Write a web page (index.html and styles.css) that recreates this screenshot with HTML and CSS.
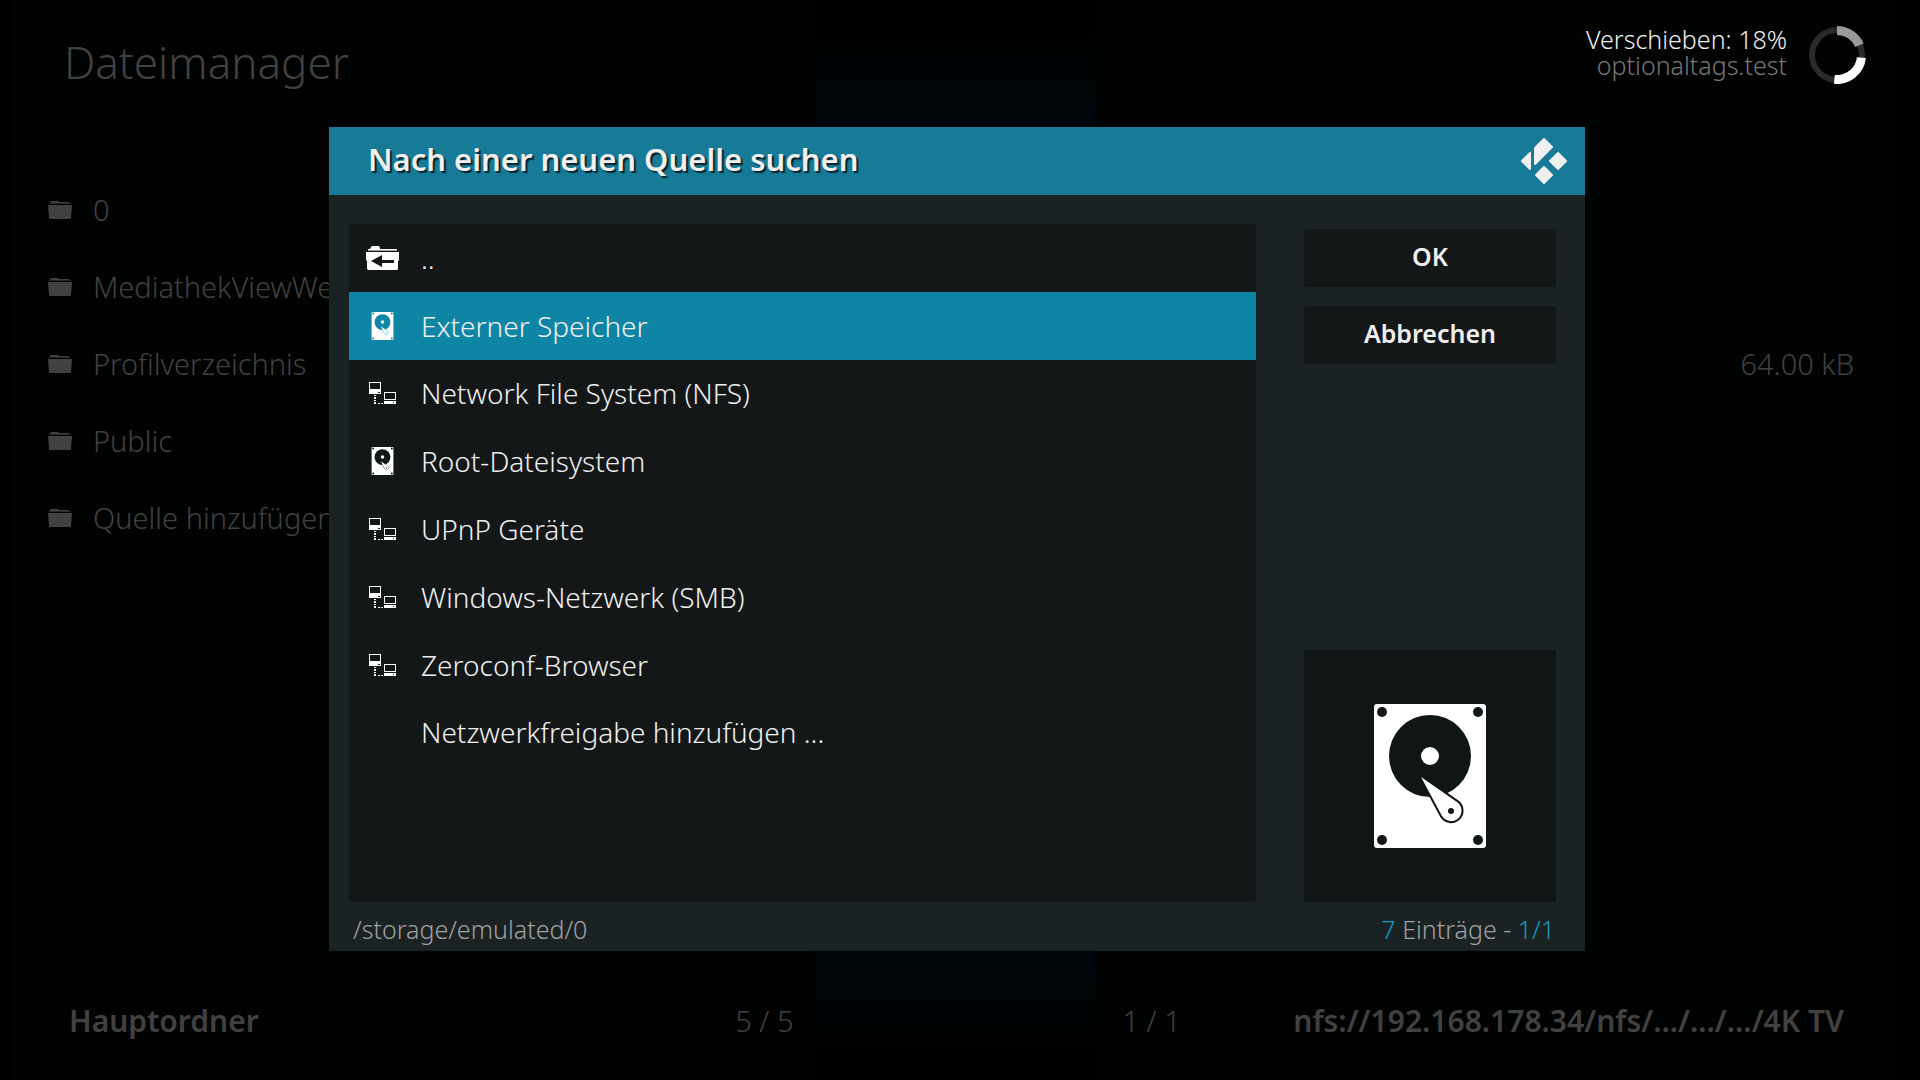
FILE: index.html
```html
<!DOCTYPE html>
<html lang="de">
  <head>
    <meta charset="UTF-8" />
    <meta name="viewport" content="width=device-width, initial-scale=1.0" />
    <title>Dateimanager</title>
    <link rel="stylesheet" href="styles.css">
  </head>
  <body>
    <!-- ========== ICONS ========== -->
    <svg class="sprite" aria-hidden="true">
      <symbol id="folder" viewBox="0 0 24 18">
        <path d="M3 0h7l1 1h10v1H2V1z" />
        <path d="M1 2h22v1H1z" opacity="0.6" />
        <path d="M0 4h24l-1 13q0 1-1 1H2q-1 0-1-1z" />
      </symbol>
      <symbol id="folder-back" viewBox="0 0 33 24">
        <path d="M5 1l1-1h7l1 2v1h17v1H2V3h2z" />
        <path d="M2 4h29v1H2z" opacity="0.6" />
        <path d="M0 6h33v8l-1 1v8l-1 1H2l-1-1v-8l-1-1z" />
        <path class="hole" d="M5 15l11-6v5h12v3H16v4z" />
      </symbol>
      <symbol id="hdd" viewBox="0 0 112 144">
        <rect width="112" height="144" rx="3" />
        <circle class="hole" cx="56" cy="52" r="41" />
        <circle cx="56" cy="52" r="9" />
        <path class="arm" d="M47 73L83 98A10.5 10.5 0 1 1 68 112Z" />
        <g class="hole">
          <circle cx="77" cy="107" r="3" />
          <circle cx="8" cy="8" r="5" />
          <circle cx="104" cy="8" r="5" />
          <circle cx="8" cy="136" r="5" />
          <circle cx="104" cy="136" r="5" />
        </g>
      </symbol>
      <symbol id="network" viewBox="0 0 27 22">
        <path fill-rule="evenodd" d="M0 0h12v12H0zM1 1v6h10V1zM9 10v1h2v-1z" />
        <path fill-rule="evenodd" d="M15 10h12v8H15zM16 11v6h10v-6zM15 19h12v3H15zM24 20v1h1v-1z" />
        <path d="M5 13h2v1H5zM5 15h2v2H5zM5 18h2v1H5zM5 20h2v2H5zM9 21h2v1H9zM12 21h2v1h-2z" />
      </symbol>
    </svg>

    <!-- ========== DATEIMANAGER ========== -->
    <main class="manager">
      <section class="pane">
        <h1>Dateimanager</h1>
        <ul class="files">
          <li><svg><use href="#folder" /></svg><span>0</span></li>
          <li><svg><use href="#folder" /></svg><span>MediathekViewWeb</span></li>
          <li><svg><use href="#folder" /></svg><span>Profilverzeichnis</span></li>
          <li><svg><use href="#folder" /></svg><span>Public</span></li>
          <li><svg><use href="#folder" /></svg><span>Quelle hinzufügen ...</span></li>
        </ul>
        <footer class="status">
          <strong>Hauptordner</strong>
          <span>5 / 5</span>
        </footer>
      </section>
      <div class="divider"></div>
      <section class="pane pane-right">
        <div class="progress">
          <div>
            <p>Verschieben: 18%</p>
            <p class="file">optionaltags.test</p>
          </div>
          <svg class="spinner" viewBox="0 0 58 58">
            <circle cx="29" cy="29" r="25" stroke="#2a2a2a" stroke-width="6" />
            <path d="M29 4.500A24.500 24.500 0 0 1 51.500 19.200" stroke="#999" stroke-width="9" />
            <path d="M53.400 31.600A24.500 24.500 0 0 1 26.400 53.400" stroke="#fff" stroke-width="9" />
          </svg>
        </div>
        <ul class="files">
          <li class="size">64.00 kB</li>
        </ul>
        <footer class="status">
          <span>1 / 1</span>
          <strong>nfs://192.168.178.34/nfs/.../.../.../4K TV</strong>
        </footer>
      </section>
    </main>

    <!-- ========== DIALOG ========== -->
    <div class="dialog" role="dialog" aria-labelledby="dialogTitle">
      <header>
        <h2 id="dialogTitle">Nach einer neuen Quelle suchen</h2>
        <svg class="logo" viewBox="0 0 46 46">
          <path d="M1 23l8-8v16zM23 1l8 8-17 17V10zM37 15l8 8-8 8-8-8zM23 29l8 8-8 8-8-8z" />
        </svg>
      </header>
      <div class="content">
        <ul class="sources">
          <li><button type="button"><svg class="back"><use href="#folder-back" /></svg>..</button></li>
          <li><button type="button" class="selected"><svg><use href="#hdd" /></svg>Externer Speicher</button></li>
          <li><button type="button"><svg class="net"><use href="#network" /></svg>Network File System (NFS)</button></li>
          <li><button type="button"><svg><use href="#hdd" /></svg>Root-Dateisystem</button></li>
          <li><button type="button"><svg class="net"><use href="#network" /></svg>UPnP Geräte</button></li>
          <li><button type="button"><svg class="net"><use href="#network" /></svg>Windows-Netzwerk (SMB)</button></li>
          <li><button type="button"><svg class="net"><use href="#network" /></svg>Zeroconf-Browser</button></li>
          <li><button type="button"><svg></svg>Netzwerkfreigabe hinzufügen ...</button></li>
        </ul>
        <aside>
          <button type="button" class="action">OK</button>
          <button type="button" class="action">Abbrechen</button>
          <div class="thumb"><svg><use href="#hdd" /></svg></div>
        </aside>
      </div>
      <footer class="info">
        <span>/storage/emulated/0</span>
        <span><b>7</b> Einträge - <b>1/1</b></span>
      </footer>
    </div>
  </body>
</html>
```
FILE: styles.css
```css
:root {
  --dim: #414141;
  --header: #177a97;
  --selected: #0f85a5;
  --dialog: #1b2224;
  --panel: #141718;
  --thumb: #101516;
  --text: #f0f0f0;
  --hole: var(--panel);
}

* {
  margin: 0;
  padding: 0;
  box-sizing: border-box;
}

body {
  height: 100vh;
  background-color: #000;
  color: var(--dim);
  font-family: "Noto Sans", "Open Sans", sans-serif;
  font-weight: 300;
  font-size: 29px;
  overflow: hidden;
}

ul {
  list-style: none;
}

svg {
  fill: currentColor;
}

button {
  border: none;
  font: inherit;
  color: inherit;
  cursor: pointer;
}

.sprite {
  position: absolute;
  width: 0;
  height: 0;
}

.hole {
  fill: var(--hole);
}

.arm {
  stroke: var(--hole);
  stroke-width: 4px;
  paint-order: stroke;
}

/* ========== DATEIMANAGER ========== */
.manager {
  display: grid;
  grid-template-columns: 1fr 280px 1fr;
  height: 100%;
  padding: 0 22px 0 11px;
}

.pane {
  display: flex;
  flex-direction: column;
  min-width: 0;
  padding: 32px 21px 27px 37px;
  background-color: #010202;
}

.divider {
  margin: 16px 0;
  background: linear-gradient(#000, #000b10 15%, #000b10 85%, #000);
}

.pane h1 {
  height: 139px;
  padding-left: 16px;
  font-size: 44px;
  font-weight: 300;
  line-height: 60px;
}

.files {
  flex: 1;
  display: grid;
  grid-auto-rows: 77px;
}

.files li {
  display: flex;
  align-items: center;
  gap: 21px;
  white-space: nowrap;
}

.files svg {
  width: 24px;
  height: 18px;
}

.files .size {
  grid-row: 3;
  justify-content: flex-end;
}

.status {
  display: flex;
  justify-content: space-between;
  padding-left: 21px;
  line-height: 64px;
}

.status strong {
  font-size: 30px;
  font-weight: 600;
}

.pane-right {
  padding: 26px 44px 27px 28px;
}

.pane-right .status {
  padding-left: 0;
  padding-right: 10px;
}

.progress {
  display: flex;
  justify-content: flex-end;
  gap: 21px;
  height: 145px;
  margin-right: -12px;
  color: var(--text);
  font-size: 25px;
  line-height: 26px;
  text-align: right;
}

.progress .file {
  color: #777;
}

.spinner {
  width: 58px;
  height: 58px;
  fill: none;
}

/* ========== DIALOG ========== */
.dialog {
  position: fixed;
  inset: 127px 335px 129px 329px;
  display: flex;
  flex-direction: column;
  background-color: var(--dialog);
  color: var(--text);
}

.dialog header {
  display: flex;
  align-items: center;
  justify-content: space-between;
  height: 68px;
  padding: 0 18px 0 39px;
  background-color: var(--header);
}

.dialog h2 {
  padding-bottom: 4px;
  font-size: 31px;
  font-weight: 600;
  text-shadow: 2px 2px 1px #06222b;
}

.logo {
  width: 46px;
  height: 46px;
  stroke: currentColor;
  stroke-width: 2px;
  stroke-linejoin: round;
}

.content {
  flex: 1;
  display: flex;
  gap: 48px;
  padding: 29px 29px 0 20px;
}

.sources {
  flex: 1;
  display: grid;
  grid-template-rows: repeat(10, 1fr);
  border-radius: 4px;
  background-color: var(--panel);
}

.sources button {
  display: flex;
  align-items: center;
  gap: 22px;
  width: 100%;
  height: 100%;
  padding: 0 17px;
  background: none;
  font-size: 28px;
  text-align: left;
}

.sources .selected {
  --hole: var(--selected);
  background-color: var(--selected);
}

.sources svg {
  width: 33px;
  height: 28px;
  color: #fff;
}

.sources .net {
  height: 22px;
}

.sources .back {
  height: 24px;
}

aside {
  display: flex;
  flex-direction: column;
  gap: 19px;
  width: 252px;
  padding-top: 5px;
}

.action {
  height: 58px;
  padding-bottom: 4px;
  border-radius: 3px;
  background-color: var(--panel);
  font-size: 25px;
  font-weight: 600;
}

.thumb {
  --hole: var(--thumb);
  display: grid;
  place-items: center;
  height: 252px;
  margin-top: auto;
  background-color: var(--thumb);
  color: #fff;
}

.thumb svg {
  width: 112px;
  height: 144px;
}

.info {
  display: flex;
  justify-content: space-between;
  padding: 6px 30px 0 24px;
  color: #a0a0a0;
  font-size: 25px;
  line-height: 43px;
}

.info b {
  color: #139bc4;
  font-weight: inherit;
}
```
